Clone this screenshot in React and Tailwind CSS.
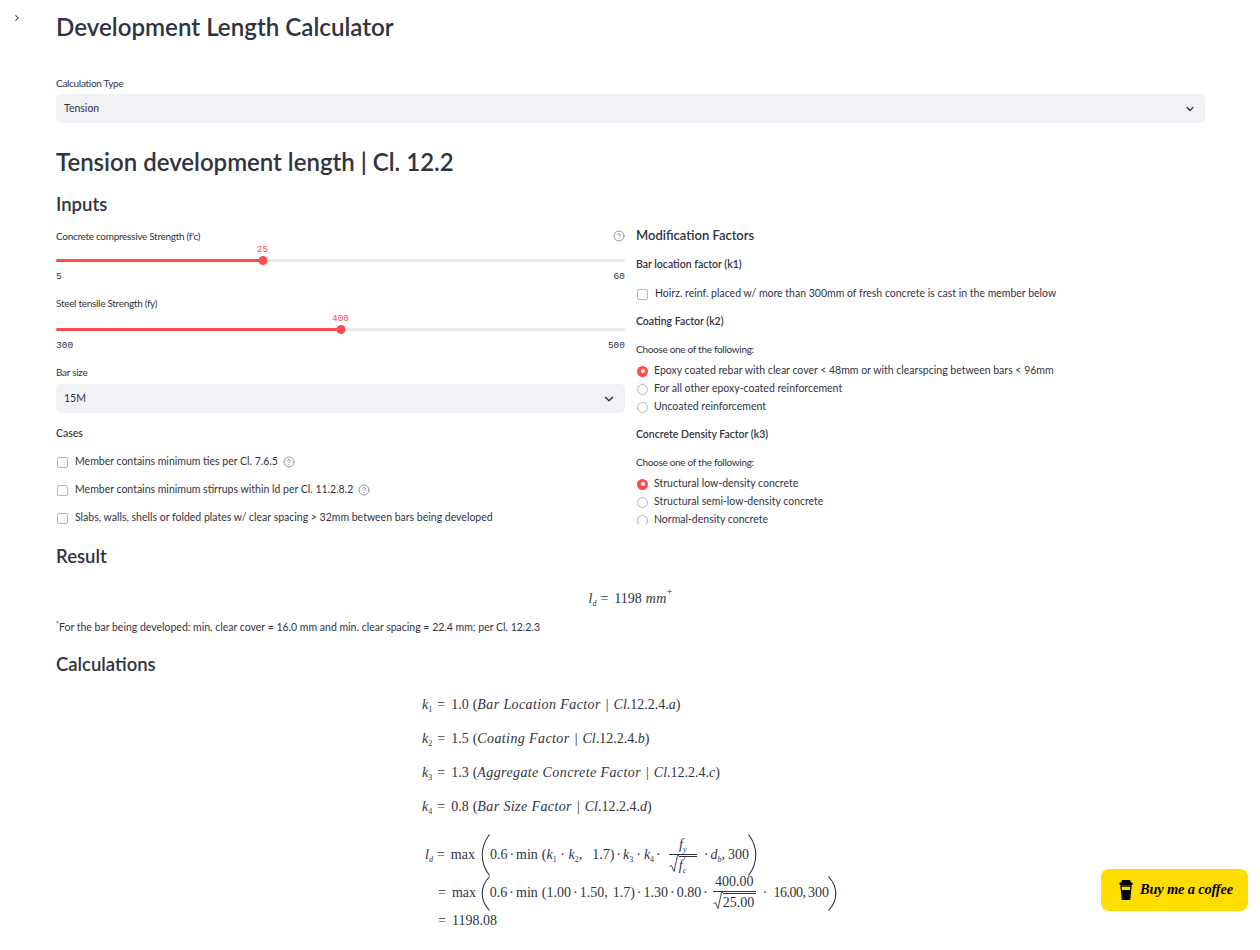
import React from 'react';
import { ChevronDown, ChevronRight, CircleHelp } from 'lucide-react';

const Label = ({ children, className = '' }) => (
  <div className={`flex items-center text-[10px] tracking-[-0.3px] leading-none text-[#31333f] ${className}`}>{children}</div>
);

const Help = () => <CircleHelp size={12} strokeWidth={1.6} className="text-[#7d7f87] shrink-0" />;

const Select = ({ value, iconSize }) => (
  <div className="h-[29px] rounded-[5px] bg-[#f0f2f6] flex items-center justify-between pl-[8px] pr-[9px] text-[10.5px] text-[#31333f]">
    <span className="pt-[1px]">{value}</span>
    <ChevronDown size={iconSize} strokeWidth={2.5} className="text-[#31333f]" />
  </div>
);

const Slider = ({ value, pct, min, max }) => (
  <div>
    <div className="relative h-[14px]">
      <span
        className="absolute top-[-1px] -translate-x-1/2 font-['Liberation_Mono',monospace] text-[9.5px] leading-[12px] text-[#ff4b4b]"
        style={{ left: `${pct}%` }}
      >
        {value}
      </span>
    </div>
    <div className="relative h-[3px] rounded-full bg-[#e6eaf1]">
      <div className="h-full rounded-full bg-[#ff4b4b]" style={{ width: `${pct}%` }} />
      <div
        className="absolute top-[-3px] w-[9px] h-[9px] -translate-x-1/2 rounded-full bg-[#ff4b4b]"
        style={{ left: `${pct}%` }}
      />
    </div>
    <div className="flex justify-between mt-[9px] font-['Liberation_Mono',monospace] text-[9.5px] leading-[12px] text-[#31333f]">
      <span>{min}</span>
      <span>{max}</span>
    </div>
  </div>
);

const Check = ({ children, className = '' }) => (
  <div className={`flex items-center text-[10.5px] text-[#31333f] ${className}`}>
    <span className="w-[11px] h-[11px] rounded-[2px] border border-[#b4b6bd] bg-white ml-[1px] mr-[7px] shrink-0" />
    {children}
  </div>
);

const Radio = ({ checked, faint, children }) => (
  <div className="h-[18px] flex items-center text-[10.5px] text-[#31333f]">
    {checked ? (
      <span className="w-[11px] h-[11px] rounded-full bg-[#ff4b4b] ml-[1px] mr-[6px] shrink-0 flex items-center justify-center">
        <span className="w-[4px] h-[4px] rounded-full bg-white" />
      </span>
    ) : (
      <span className={`w-[11px] h-[11px] rounded-full border border-[#b4b6bd] bg-white ml-[1px] mr-[6px] shrink-0 ${faint ? 'border-b-white' : ''}`} />
    )}
    {children}
  </div>
);

// math bits, sizes picked by eye against the reference
const I = ({ children }) => <i className="tracking-[0.4px]">{children}</i>;
const Sym = ({ base, sub, upright }) => (
  <span>
    <i>{base}</i>
    <sub className={`text-[8px] leading-none align-[-1px] ${upright ? '' : 'italic'}`}>{sub}</sub>
  </span>
);
const Eq = () => <span className="ml-[4px] mr-[6px]">=</span>;
const Dot = ({ className = 'mx-[2px]' }) => <span className={className}>·</span>;
const Comma = ({ className = 'mr-[5px]' }) => <span className={className}>,</span>;

const BigParen = ({ right, h = 42 }) => (
  <svg
    width="9"
    height={h}
    viewBox="0 0 9 44"
    preserveAspectRatio="none"
    className={`shrink-0 ${right ? '-scale-x-100 -ml-[1px]' : ''}`}
  >
    <path d="M8.500 .5C3 8 1.200 15 1.200 22S3 36 8.500 43.500" fill="none" stroke="#31333f" strokeWidth="1.100" />
  </svg>
);

const Root = ({ children, w }) => (
  <span className="inline-flex items-end">
    <svg width="10" height="19" viewBox="0 0 10 19" className="shrink-0">
      <path d="M.5 11.500l2-1 2.500 6L8.500.5H10" fill="none" stroke="#31333f" strokeWidth="0.900" />
    </svg>
    <span className={`border-t border-[#31333f] leading-[17px] ${w}`}>{children}</span>
  </span>
);

const Frac = ({ top, bottom, className = '' }) => (
  <span className={`inline-flex flex-col items-center mr-[5px] ${className}`}>
    <span className="border-b border-[#31333f] w-full text-center leading-[17px] pb-[1px]">{top}</span>
    <span className="leading-[19px]">{bottom}</span>
  </span>
);

const KLine = ({ n, value, name, end }) => (
  <div className="h-[34px] flex items-center">
    <Sym base="k" sub={n} upright />
    <span className="ml-[1px]"><Eq /></span>
    <span>{value}</span>
    <span className="ml-[4px]">(</span>
    <I>{name}</I>
    <span className="mx-[5px]">|</span>
    <i>Cl</i>
    <span>.12.2.4.</span>
    <i>{end}</i>
    <span>)</span>
  </div>
);

export default function App() {
  return (
    <div className="relative w-[1260px] h-[950px] overflow-hidden bg-white font-['Lato','Noto_Sans',sans-serif] text-[#31333f]">
      <ChevronRight size={10} strokeWidth={2.5} className="absolute left-[12px] top-[13px] text-[#31333f]" />

      <main className="w-[1149px] ml-[56px]">
        <h1 className="h-[54px] flex items-center text-[24.15px] font-semibold text-[#31333f]">
          Development Length Calculator
        </h1>

        <Label className="h-[12px] mt-[23px] mb-[5px]">Calculation Type</Label>
        <Select value="Tension" iconSize={12} />

        <h2 className="h-[38px] mt-[20px] flex items-center text-[24px] font-semibold">
          Tension development length | Cl. 12.2
        </h2>
        <h3 className="h-[28px] mt-[10px] flex items-center text-[18.5px] font-semibold">Inputs</h3>

        <div className="flex gap-[11px] mt-[8px]">
          <section className="w-[569px]">
            <Label className="h-[18px] justify-between">
              <span>Concrete compressive Strength (f'c)</span>
              <Help />
            </Label>
            <Slider value="25" pct={36.3} min="5" max="60" />

            <Label className="h-[12px] mt-[14px]">Steel tensile Strength (fy)</Label>
            <div className="mt-[5px]">
              <Slider value="400" pct={50} min="300" max="500" />
            </div>

            <Label className="h-[12px] mt-[14px] mb-[6px]">Bar size</Label>
            <Select value="15M" iconSize={14} />

            <div className="h-[12px] mt-[15px] flex items-center text-[10.5px] font-medium">Cases</div>
            <Check className="h-[28px] mt-[8px]">
              Member contains minimum ties per Cl. 7.6.5
              <span className="ml-[5px]"><Help /></span>
            </Check>
            <Check className="h-[28px]">
              Member contains minimum stirrups within ld per Cl. 11.2.8.2
              <span className="ml-[5px]"><Help /></span>
            </Check>
            <Check className="h-[28px]">
              Slabs, walls, shells or folded plates w/ clear spacing &gt; 32mm between bars being developed
            </Check>
          </section>

          <section className="w-[569px]">
            <div className="h-[18px] flex items-center text-[13px] font-semibold">Modification Factors</div>
            <div className="h-[14px] mt-[13px] flex items-center text-[10.5px] font-semibold">Bar location factor (k1)</div>
            <Check className="h-[16px] mt-[14px]">
              Hoirz. reinf. placed w/ more than 300mm of fresh concrete is cast in the member below
            </Check>
            <div className="h-[14px] mt-[13px] flex items-center text-[10.5px] font-semibold">Coating Factor (k2)</div>
            <Label className="h-[12px] mt-[14px] mb-[7px]">Choose one of the following:</Label>
            <Radio checked>Epoxy coated rebar with clear cover &lt; 48mm or with clearspcing between bars &lt; 96mm</Radio>
            <Radio>For all other epoxy-coated reinforcement</Radio>
            <Radio>Uncoated reinforcement</Radio>
            <div className="h-[14px] mt-[12px] flex items-center text-[10.5px] font-semibold">Concrete Density Factor (k3)</div>
            <Label className="h-[12px] mt-[14px] mb-[7px]">Choose one of the following:</Label>
            <Radio checked>Structural low-density concrete</Radio>
            <Radio>Structural semi-low-density concrete</Radio>
            <Radio faint>Normal-density concrete</Radio>
          </section>
        </div>

        <h3 className="h-[28px] mt-[11px] flex items-center text-[18.5px] font-semibold">Result</h3>
        <div className="h-[24px] mt-[15px] flex items-center justify-center font-['Liberation_Serif',serif] text-[14px]">
          <Sym base="l" sub="d" />
          <Eq />
          <span>1198</span>
          <I><span className="ml-[4px]">mm</span></I>
          <sup className="text-[10px] leading-none mb-[3px]">+</sup>
        </div>
        <div className="h-[14px] mt-[11px] flex items-center text-[10.5px]">
          <sup className="text-[7px] leading-none">*</sup>For the bar being developed: min. clear cover = 16.0 mm and min. clear spacing = 22.4 mm; per Cl. 12.2.3
        </div>
        <h3 className="h-[28px] mt-[16px] flex items-center text-[18.5px] font-semibold">Calculations</h3>

        <div className="w-[415px] ml-[366px] mt-[9px] font-['Liberation_Serif',serif] text-[14px] leading-none text-[#31333f] whitespace-nowrap">
          <KLine n="1" value="1.0" name="Bar Location Factor" end="a" />
          <KLine n="2" value="1.5" name="Coating Factor" end="b" />
          <KLine n="3" value="1.3" name="Aggregate Concrete Factor" end="c" />
          <KLine n="4" value="0.8" name="Bar Size Factor" end="d" />

          <div className="h-[44px] mt-[9px] flex items-center pl-[3px]">
            <Sym base="l" sub="d" />
            <Eq />
            <span>max</span>
            <span className="w-[6px]" />
            <BigParen />
            <span>0.6</span>
            <Dot />
            <span>min</span>
            <span className="ml-[4px]">(</span>
            <Sym base="k" sub="1" upright />
            <Dot className="mx-[3.500px]" />
            <Sym base="k" sub="2" upright />
            <Comma className="mr-[10px]" />
            <span>1.7)</span>
            <Dot />
            <Sym base="k" sub="3" upright />
            <Dot className="mx-[3px]" />
            <Sym base="k" sub="4" upright />
            <Dot />
            <Frac
              className="ml-[6px] translate-y-[2px]"
              top={<Sym base="f" sub="y" />}
              bottom={<Root w="w-[18px]"><span className="relative"><Sym base="f" sub="c" /><span className="absolute left-[5px] top-[-6px] text-[9px]">′</span></span></Root>}
            />
            <Dot />
            <Sym base="d" sub="b" />
            <Comma className="mr-[3px]" />
            <span>300</span>
            <BigParen right />
          </div>
          <div className="h-[44px] mt-[-6px] flex items-center pl-[16px]">
            <span className="mr-[6px]">=</span>
            <span>max</span>
            <span className="w-[6px]" />
            <BigParen h={35} />
            <span>0.6</span>
            <Dot />
            <span>min</span>
            <span className="ml-[4px]">(1.00</span>
            <Dot />
            <span>1.50</span>
            <Comma />
            <span>1.7)</span>
            <Dot />
            <span>1.30</span>
            <Dot />
            <span>0.80</span>
            <Dot />
            <Frac
              className="ml-[3px] translate-y-[1px]"
              top="400.00"
              bottom={<Root w="w-[33px]">25.00</Root>}
            />
            <Dot className="ml-[2px] mr-[6px]" />
            <span className="tracking-[-0.5px]">16.00</span>
            <Comma className="mr-[2px]" />
            <span>300</span>
            <BigParen right h={35} />
          </div>
          <div className="h-[16px] mt-[-2px] flex items-center pl-[16px]">
            <span className="mr-[6px]">=</span>
            <span>1198.08</span>
          </div>
        </div>
      </main>

      <div className="absolute left-[1101px] top-[869px] w-[147px] h-[42px] rounded-[8px] bg-[#ffdd00] flex items-center pl-[18px] gap-[7px]">
        <svg width="14" height="20" viewBox="0 0 14 20">
          <path d="M3 0h8l1 2.500h1.500v2.500H.5V2.500H2z" fill="#000" />
          <path d="M2 6h10l-1.300 13.300H3.300z" fill="none" stroke="#000" strokeWidth="1.300" />
          <path d="M2.700 10h8.600l-1 9H3.700z" fill="#000" />
        </svg>
        <span className="font-['Liberation_Serif',serif] italic font-semibold text-[14.5px] tracking-[-0.2px] text-black">Buy me a coffee</span>
      </div>
    </div>
  );
}
